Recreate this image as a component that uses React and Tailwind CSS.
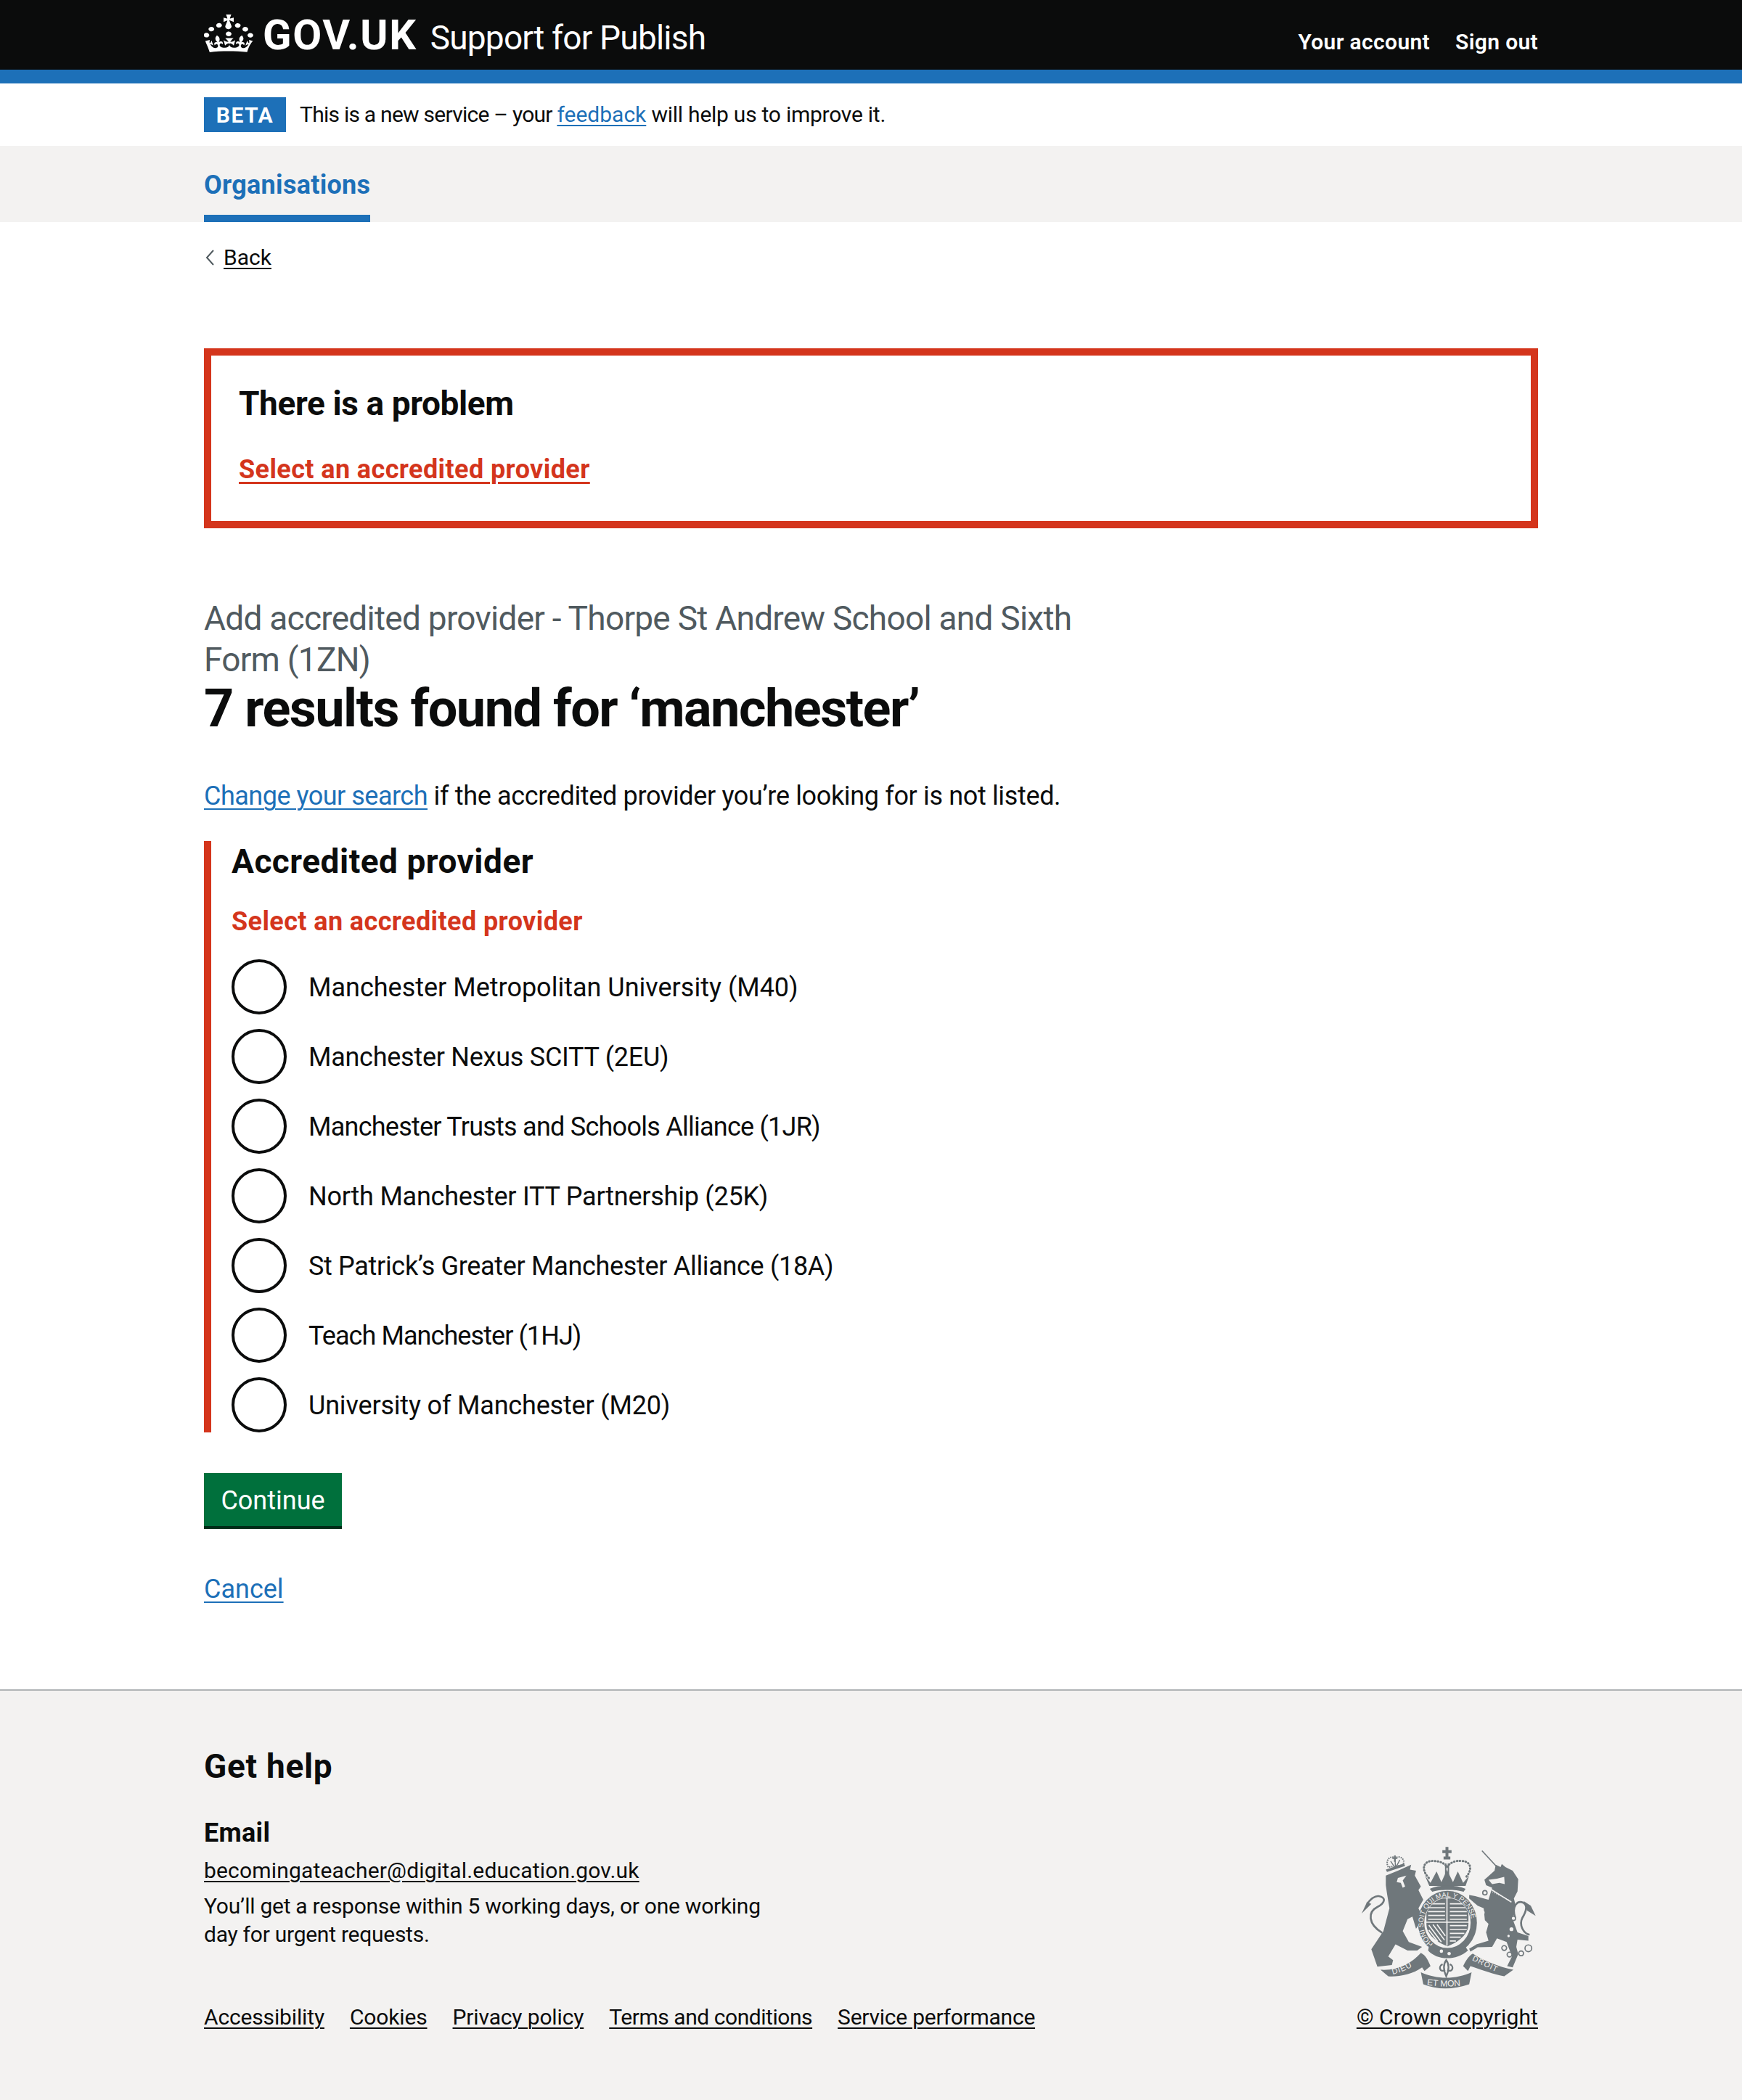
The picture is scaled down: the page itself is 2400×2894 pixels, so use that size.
const providers = [
  { name: 'Manchester Metropolitan University (M40)', tracking: 'tracking-normal' },
  { name: 'Manchester Nexus SCITT (2EU)', tracking: 'tracking-[-0.26px]' },
  { name: 'Manchester Trusts and Schools Alliance (1JR)', tracking: 'tracking-[-0.75px]' },
  { name: 'North Manchester ITT Partnership (25K)', tracking: 'tracking-[-0.24px]' },
  { name: 'St Patrick’s Greater Manchester Alliance (18A)', tracking: 'tracking-[-0.32px]' },
  { name: 'Teach Manchester (1HJ)', tracking: 'tracking-[-0.93px]' },
  { name: 'University of Manchester (M20)', tracking: 'tracking-[-0.18px]' },
];

const footerLinks = [
  { label: 'Accessibility', tracking: 'tracking-[-0.15px]' },
  { label: 'Cookies', tracking: 'tracking-[-0.15px]' },
  { label: 'Privacy policy', tracking: 'tracking-[-0.15px]' },
  { label: 'Terms and conditions', tracking: 'tracking-[-0.45px]' },
  { label: 'Service performance', tracking: 'tracking-[-0.25px]' },
];

function CrownLogo() {
  return (
    <svg viewBox="0 0 32 30" preserveAspectRatio="none" className="h-[52px] w-[68px] fill-white" aria-hidden="true">
      <path d="M22.6 10.4c-1 .4-2-.1-2.4-1-.4-.9.1-2 1-2.4.9-.4 2 .1 2.4 1s-.1 2-1 2.4m-5.9 6.7c-.9.4-2-.1-2.4-1-.4-.9.1-2 1-2.4.9-.4 2 .1 2.4 1s-.1 2-1 2.4m10.8-3.7c-1 .4-2-.1-2.4-1-.4-.9.1-2 1-2.4.9-.4 2 .1 2.4 1s0 2-1 2.4m3.3 4.8c-1 .4-2-.1-2.4-1-.4-.9.1-2 1-2.4.9-.4 2 .1 2.4 1s-.1 2-1 2.4M17 4.7l2.3 1.2V2.5l-2.3.7-.2-.2.9-3h-3.4l.9 3-.2.2c-.1.1-2.3-.7-2.3-.7v3.4L15 4.7c.1.1.1.2.2.2l-1.3 4c-.1.2-.1.4-.1.6 0 1.1.8 2 1.9 2.2h.3c1-.2 1.9-1.1 1.9-2.2 0-.2 0-.4-.1-.6l-1.3-4c-.1-.1 0-.2.2-.3m-7.6 5.7c.9.4 2-.1 2.4-1 .4-.9-.1-2-1-2.4-.9-.4-2 .1-2.4 1s0 2 1 2.4m-5 3c.9.4 2-.1 2.4-1 .4-.9-.1-2-1-2.4-.9-.4-2 .1-2.4 1s.1 2 1 2.4m-3.2 4.8c.9.4 2-.1 2.4-1 .4-.9-.1-2-1-2.4-.9-.4-2 .1-2.4 1s0 2 1 2.4m14.8 11c4.4 0 8.6.3 12.3.8 1.1-4.5 2.4-7 3.7-8.8l-2.5-.9c.2 1.3.3 1.9 0 2.7-.4-.4-.8-1.1-1.1-2.3l-1.2 4c.7-.5 1.3-.8 2-.9-1.1 2.5-2.6 3.1-3.5 3-1.1-.2-1.7-1.2-1.5-2.1.3-1.2 1.5-1.5 2.1-.1 1.1-2.3-.8-3-2-2.3 1.9-1.9 2.1-3.5.6-5.6-2.1 1.6-2.1 3.2-1.2 5.5-1.2-1.4-3.2-.6-2.5 1.6.9-1.4 2.1-.5 1.9.8-.2 1.1-1.7 2.1-3.5 1.9-2.7-.2-2.9-2.1-2.9-3.6.7-.1 1.9.5 2.9 1.9l1-4.3c-1.1 1.1-2.1 1.4-3.2 1.4.4-1.2 2.1-3 2.1-3h-5.4s1.7 1.9 2.1 3c-1.1 0-2.1-.2-3.2-1.4l1 4.3c1-1.4 2.2-2 2.9-1.9-.1 1.5-.2 3.4-2.9 3.6-1.9.2-3.4-.8-3.5-1.9-.2-1.3 1-2.2 1.9-.8.7-2.3-1.2-3-2.5-1.6.9-2.2.9-3.9-1.2-5.5-1.5 2-1.3 3.7.6 5.6-1.2-.7-3.1 0-2 2.3.6-1.4 1.8-1.1 2.1.1.2.9-.3 1.9-1.5 2.1-.9.2-2.4-.5-3.5-3 .6 0 1.2.3 2 .9l-1.2-4c-.3 1.1-.7 1.9-1.1 2.3-.3-.8-.2-1.4 0-2.7l-2.9.9C1.3 23 2.6 25.5 3.7 30c3.7-.5 7.9-.8 12.3-.8" />
    </svg>
  );
}

function Crest() {
  const grey = '#6f777b';
  const bg = '#f3f2f1';
  return (
    <svg viewBox="100 70 730 600" className="h-[200px] w-[243px]" aria-hidden="true">
      <defs>
        <path id="garter" d="M395 478 A100 108 0 1 1 515 478" />
        <path id="ribLeft" d="M228 604 Q290 590 335 552" />
        <path id="ribMid" d="M370 648 Q450 660 535 648" />
        <path id="ribRight" d="M556 545 Q610 570 680 606" />
        <clipPath id="shieldClip">
          <ellipse cx="455" cy="390" rx="94" ry="103" />
        </clipPath>
      </defs>

      {/* lion */}
      <path fill={grey} d="M200 195 L250 175 L305 150 L300 170 L325 175 L320 195 L345 240 L335 255 L355 295 L335 330 L365 395 L345 385 L325 415 L310 365 L290 375 L270 425 L295 470 L350 490 L330 505 L290 505 L240 480 L210 530 L230 545 L225 565 L165 572 L140 500 L190 425 L215 330 L205 270 L200 235 Z" />
      <path fill={bg} d="M250 205 L285 195 L270 215 L280 240 L270 245 L262 225 L245 222 Z" />
      <path fill="none" stroke={grey} strokeWidth="8" d="M185 432 C125 395 125 345 165 325 C195 310 205 285 170 280 C150 278 135 295 122 312" />
      <path fill={grey} d="M122 305 L140 312 L100 352 Z" />
      {/* lion crown */}
      <path fill="none" stroke={grey} strokeWidth="6" strokeDasharray="5 4" d="M210 160 C195 130 220 110 238 122 C255 110 285 125 270 152 Z" />
      <path fill={grey} d="M227 120 h7 v-8 h7 v8 h7 v6 h-7 v12 h-7 v-12 h-7 Z M200 170 L275 145 L280 155 L205 180 Z" />
      <path fill="none" stroke={grey} strokeWidth="4" d="M220 135 L240 165 M238 125 L240 160 M258 130 L242 160" />

      {/* unicorn */}
      <path fill="none" stroke={grey} strokeWidth="5" d="M598 92 L668 168" />
      <path fill={grey} d="M655 150 L675 160 L680 147 L695 160 L725 175 L748 210 L745 260 L730 290 L735 310 L725 375 L745 430 L790 445 L790 465 L745 460 L740 490 L748 520 L725 575 L702 570 L722 530 L700 470 L660 455 L640 490 L580 492 L550 510 L545 498 L575 480 L625 465 L615 430 L625 395 L610 380 L605 330 L580 320 L545 290 L545 275 L570 280 L605 290 L625 295 L640 245 L615 235 L608 212 L650 175 Z" />
      <path fill={bg} d="M625 212 L660 208 L690 200 L692 230 L670 225 L640 230 Z" />
      <path fill="none" stroke={bg} strokeWidth="5" d="M632 250 L720 305" />
      <path fill="none" stroke={bg} strokeWidth="3" strokeDasharray="4 5" d="M640 262 L715 298" />
      <path fill="none" stroke={grey} strokeWidth="8" d="M735 370 C720 320 745 295 770 308 C790 320 780 345 765 370 C750 400 770 435 795 440" />
      <path fill={grey} d="M770 300 L800 320 L820 362 L785 340 Z" />
      <g fill={bg} stroke={grey} strokeWidth="5">
        <circle cx="610" cy="266" r="9" />
        <circle cx="690" cy="495" r="10" />
        <circle cx="712" cy="522" r="10" />
        <circle cx="760" cy="517" r="10" />
        <circle cx="790" cy="496" r="14" />
        <circle cx="728" cy="372" r="9" />
      </g>
      <g fill={bg}>
        <circle cx="720" cy="417" r="8" />
        <circle cx="708" cy="445" r="5" />
        <circle cx="600" cy="348" r="9" />
      </g>

      {/* crown above the shield */}
      <path fill={grey} d="M447 76 h12 v14 h13 v12 h-13 v14 h8 v12 h-28 v-12 h8 v-14 h-13 v-12 h13 Z" />
      <path fill="none" stroke={grey} strokeWidth="9" strokeDasharray="2 10" strokeLinecap="round" d="M378 205 C340 165 360 130 400 135 C425 135 445 145 453 160 C462 145 485 130 515 135 C555 135 560 175 528 205" />
      <path fill={grey} d="M445 145 h6 v60 h-6 Z M456 145 h6 v60 h-6 Z" />
      <path fill={grey} d="M362 195 L385 225 L410 178 L430 222 L453 172 L478 222 L498 178 L520 225 L545 195 L530 238 L380 238 Z" />
      <path fill={grey} d="M382 250 C420 232 490 232 530 250 L522 262 C490 252 420 252 392 262 Z" />

      {/* garter and shield */}
      <ellipse cx="455" cy="390" rx="122" ry="132" fill={grey} />
      <ellipse cx="455" cy="390" rx="96" ry="105" fill={bg} />
      <text fontFamily="'Liberation Sans', sans-serif" fontSize="29" fill={bg}>
        <textPath href="#garter">HONI SOIT QUI MAL Y PENSE</textPath>
      </text>
      <g clipPath="url(#shieldClip)">
        <path fill={grey} d="M368 290 H542 V395 C542 440 500 470 455 488 C410 470 368 440 368 395 Z" />
        <path fill="none" stroke={bg} strokeWidth="5" d="M453 288 V486 M366 388 H544" />
        <g stroke={bg} strokeWidth="5" fill="none">
          <path d="M375 312 H445 M375 328 H445 M375 344 H445 M375 360 H445 M375 376 H445" />
          <path d="M465 312 H535 M465 328 H535 M465 344 H535 M465 360 H535 M465 376 H535" />
          <path d="M465 402 H535 M465 418 H535 M465 434 H525 M465 450 H510 M465 466 H490" />
          <path d="M378 400 L430 470 M395 398 L443 462 M412 398 L446 444 M378 420 L415 468" />
        </g>
      </g>
      <path fill={grey} d="M380 480 C420 525 490 530 530 490 L540 505 C490 550 410 545 375 505 Z" />
      <circle cx="430" cy="508" r="7" fill={bg} />
      <circle cx="462" cy="518" r="7" fill={bg} />

      {/* fleur de lis */}
      <path fill="none" stroke={grey} strokeWidth="7" d="M450 545 C435 565 440 590 450 612 C460 590 465 565 450 545 Z M445 585 C425 600 415 570 435 562 M455 585 C475 600 485 570 465 562" />

      {/* motto ribbon */}
      <path fill={grey} d="M178 585 C250 590 310 555 345 515 C365 525 375 545 385 570 L360 590 L350 575 C310 605 250 615 210 612 Z" />
      <path fill={grey} d="M345 595 C410 625 490 625 555 595 L545 645 C480 668 410 668 355 645 Z" />
      <path fill={grey} d="M520 570 C530 550 540 530 560 518 C600 545 660 570 728 585 L690 612 C630 600 585 580 550 570 L540 590 Z" />
      <text fontFamily="'Liberation Sans', sans-serif" fontSize="33" fill={bg} letterSpacing="3">
        <textPath href="#ribLeft">DIEU</textPath>
      </text>
      <text fontFamily="'Liberation Sans', sans-serif" fontSize="36" fill={bg}>
        <textPath href="#ribMid">ET MON</textPath>
      </text>
      <text fontFamily="'Liberation Sans', sans-serif" fontSize="32" fill={bg} letterSpacing="3">
        <textPath href="#ribRight">DROIT</textPath>
      </text>
    </svg>
  );
}

export default function App() {
  return (
    <div className="font-['Roboto',sans-serif] text-[#0b0c0c]">
      <header className="h-[115px] border-b-[19px] border-[#1d70b8] bg-[#0b0c0c] text-white">
        <div className="mx-auto flex h-full w-[1838px] items-start justify-between">
          <a href="#" className="flex items-start">
            <span className="mt-[20px]"><CrownLogo /></span>
            <span className="ml-[13px] mt-[14px] text-[58px] leading-[68px] font-bold tracking-[1.7px]">GOV.UK</span>
            <span className="ml-[18px] mt-[22px] text-[46px] leading-[60px] tracking-[-0.8px]">Support for Publish</span>
          </a>
          <nav className="mt-[38px] flex gap-[35px] text-[30px] leading-[40px] font-semibold tracking-[0.35px]">
            <a href="#">Your account</a>
            <a href="#">Sign out</a>
          </nav>
        </div>
      </header>

      <div className="mx-auto flex h-[86px] w-[1838px] items-center">
        <strong className="mr-[19px] flex h-[48px] w-[113px] items-center justify-center bg-[#1d70b8] text-[30px] font-bold tracking-[1.5px] text-white">BETA</strong>
        <p className="text-[30px] leading-[40px] tracking-[-0.25px]">
          <span className="tracking-[-0.75px]">This is a new service – your </span>
          <a href="#" className="tracking-normal text-[#1d70b8] underline decoration-2 underline-offset-[4px]">feedback</a> will help us to improve it.
        </p>
      </div>

      <nav className="h-[105px] bg-[#f3f2f1]">
        <div className="mx-auto w-[1838px]">
          <a href="#" className="block h-[105px] w-[229px] border-b-[10px] border-[#1d70b8] pt-[30px] text-[36px] leading-[48px] font-bold tracking-[0.28px] text-[#1d70b8]">Organisations</a>
        </div>
      </nav>

      <main className="mx-auto w-[1838px]">
        <a href="#" className="mt-[29px] flex items-center text-[30px] leading-[40px]">
          <svg viewBox="0 0 14 24" className="mr-[11px] h-[24px] w-[16px] fill-none stroke-[#505a5f] stroke-2" aria-hidden="true">
            <path d="M12 2 L3 12 L12 22" />
          </svg>
          <span className="underline decoration-2 underline-offset-[4px]">Back</span>
        </a>

        <div className="mt-[105px] h-[248px] border-[10px] border-[#d4351c] px-[38px] pt-[38px]">
          <h2 className="text-[46px] leading-[56px] font-bold tracking-[-0.4px]">There is a problem</h2>
          <a href="#" className="mt-[39px] block text-[36px] leading-[48px] font-bold tracking-[0.4px] text-[#d4351c] underline decoration-[3px] underline-offset-[5px]">Select an accredited provider</a>
        </div>

        <span className="mt-[96px] block w-[1225px] text-[46px] leading-[57px] tracking-[-0.74px] text-[#505a5f]">Add accredited provider - Thorpe St Andrew School and Sixth Form (1ZN)</span>
        <h1 className="mt-[1px] text-[72px] leading-[76px] font-bold tracking-[-1.5px]">7 results found for ‘manchester’</h1>

        <p className="mt-[58px] text-[36px] leading-[48px] tracking-[-0.35px]">
          <a href="#" className="tracking-[-0.5px] text-[#1d70b8] underline decoration-2 underline-offset-[5px]">Change your search</a> if the accredited provider you’re looking for is not listed.
        </p>

        <fieldset className="mt-[38px] border-l-[10px] border-[#d4351c] pl-[28px]">
          <legend className="contents">
            <span className="block text-[46px] leading-[56px] font-bold tracking-[0.5px]">Accredited provider</span>
          </legend>
          <p className="mt-[31px] text-[36px] leading-[48px] font-bold tracking-[0.4px] text-[#d4351c]">Select an accredited provider</p>
          <div className="mt-[28px] flex flex-col gap-[20px]">
            {providers.map((provider) => (
              <label key={provider.name} className="flex items-center">
                <span className="size-[76px] rounded-full border-[4px] border-[#0b0c0c]" />
                <span className={`ml-[30px] pt-[2px] text-[36px] leading-[48px] ${provider.tracking}`}>{provider.name}</span>
              </label>
            ))}
          </div>
        </fieldset>

        <button type="button" className="mt-[56px] block h-[73px] w-[190px] bg-[#00703c] pt-[2px] text-[36px] leading-[48px] text-white shadow-[0_4px_0_#002d18]">Continue</button>

        <p className="mt-[63px] text-[36px] leading-[48px]">
          <a href="#" className="text-[#1d70b8] underline decoration-2 underline-offset-[5px]">Cancel</a>
        </p>
      </main>

      <footer className="mt-[114px] h-[566px] border-t-2 border-[#b1b4b6] bg-[#f3f2f1]">
        <div className="mx-auto flex w-[1838px] items-end justify-between pt-[76px]">
          <div>
            <h2 className="text-[46px] leading-[56px] font-bold tracking-[0.7px]">Get help</h2>
            <h3 className="mt-[40px] text-[36px] leading-[48px] font-bold tracking-[0.3px]">Email</h3>
            <p className="mt-[9px] text-[30px] leading-[38px] tracking-[0.18px]">
              <a href="#" className="underline decoration-2 underline-offset-[4px]">becomingateacher@digital.education.gov.uk</a>
            </p>
            <p className="mt-[10px] w-[800px] text-[30px] leading-[39px] tracking-[-0.26px]">You’ll get a response within 5 working days, or one working day for urgent requests.</p>
            <ul className="mt-[76px] flex gap-[35px] text-[30px] leading-[38px]">
              {footerLinks.map((link) => (
                <li key={link.label} className={link.tracking}><a href="#" className="underline decoration-2 underline-offset-[4px]">{link.label}</a></li>
              ))}
            </ul>
          </div>
          <div className="flex flex-col items-end">
            <Crest />
            <a href="#" className="mt-[18px] text-[30px] leading-[38px] tracking-[0.1px] underline decoration-2 underline-offset-[4px]">© Crown copyright</a>
          </div>
        </div>
      </footer>
    </div>
  );
}
